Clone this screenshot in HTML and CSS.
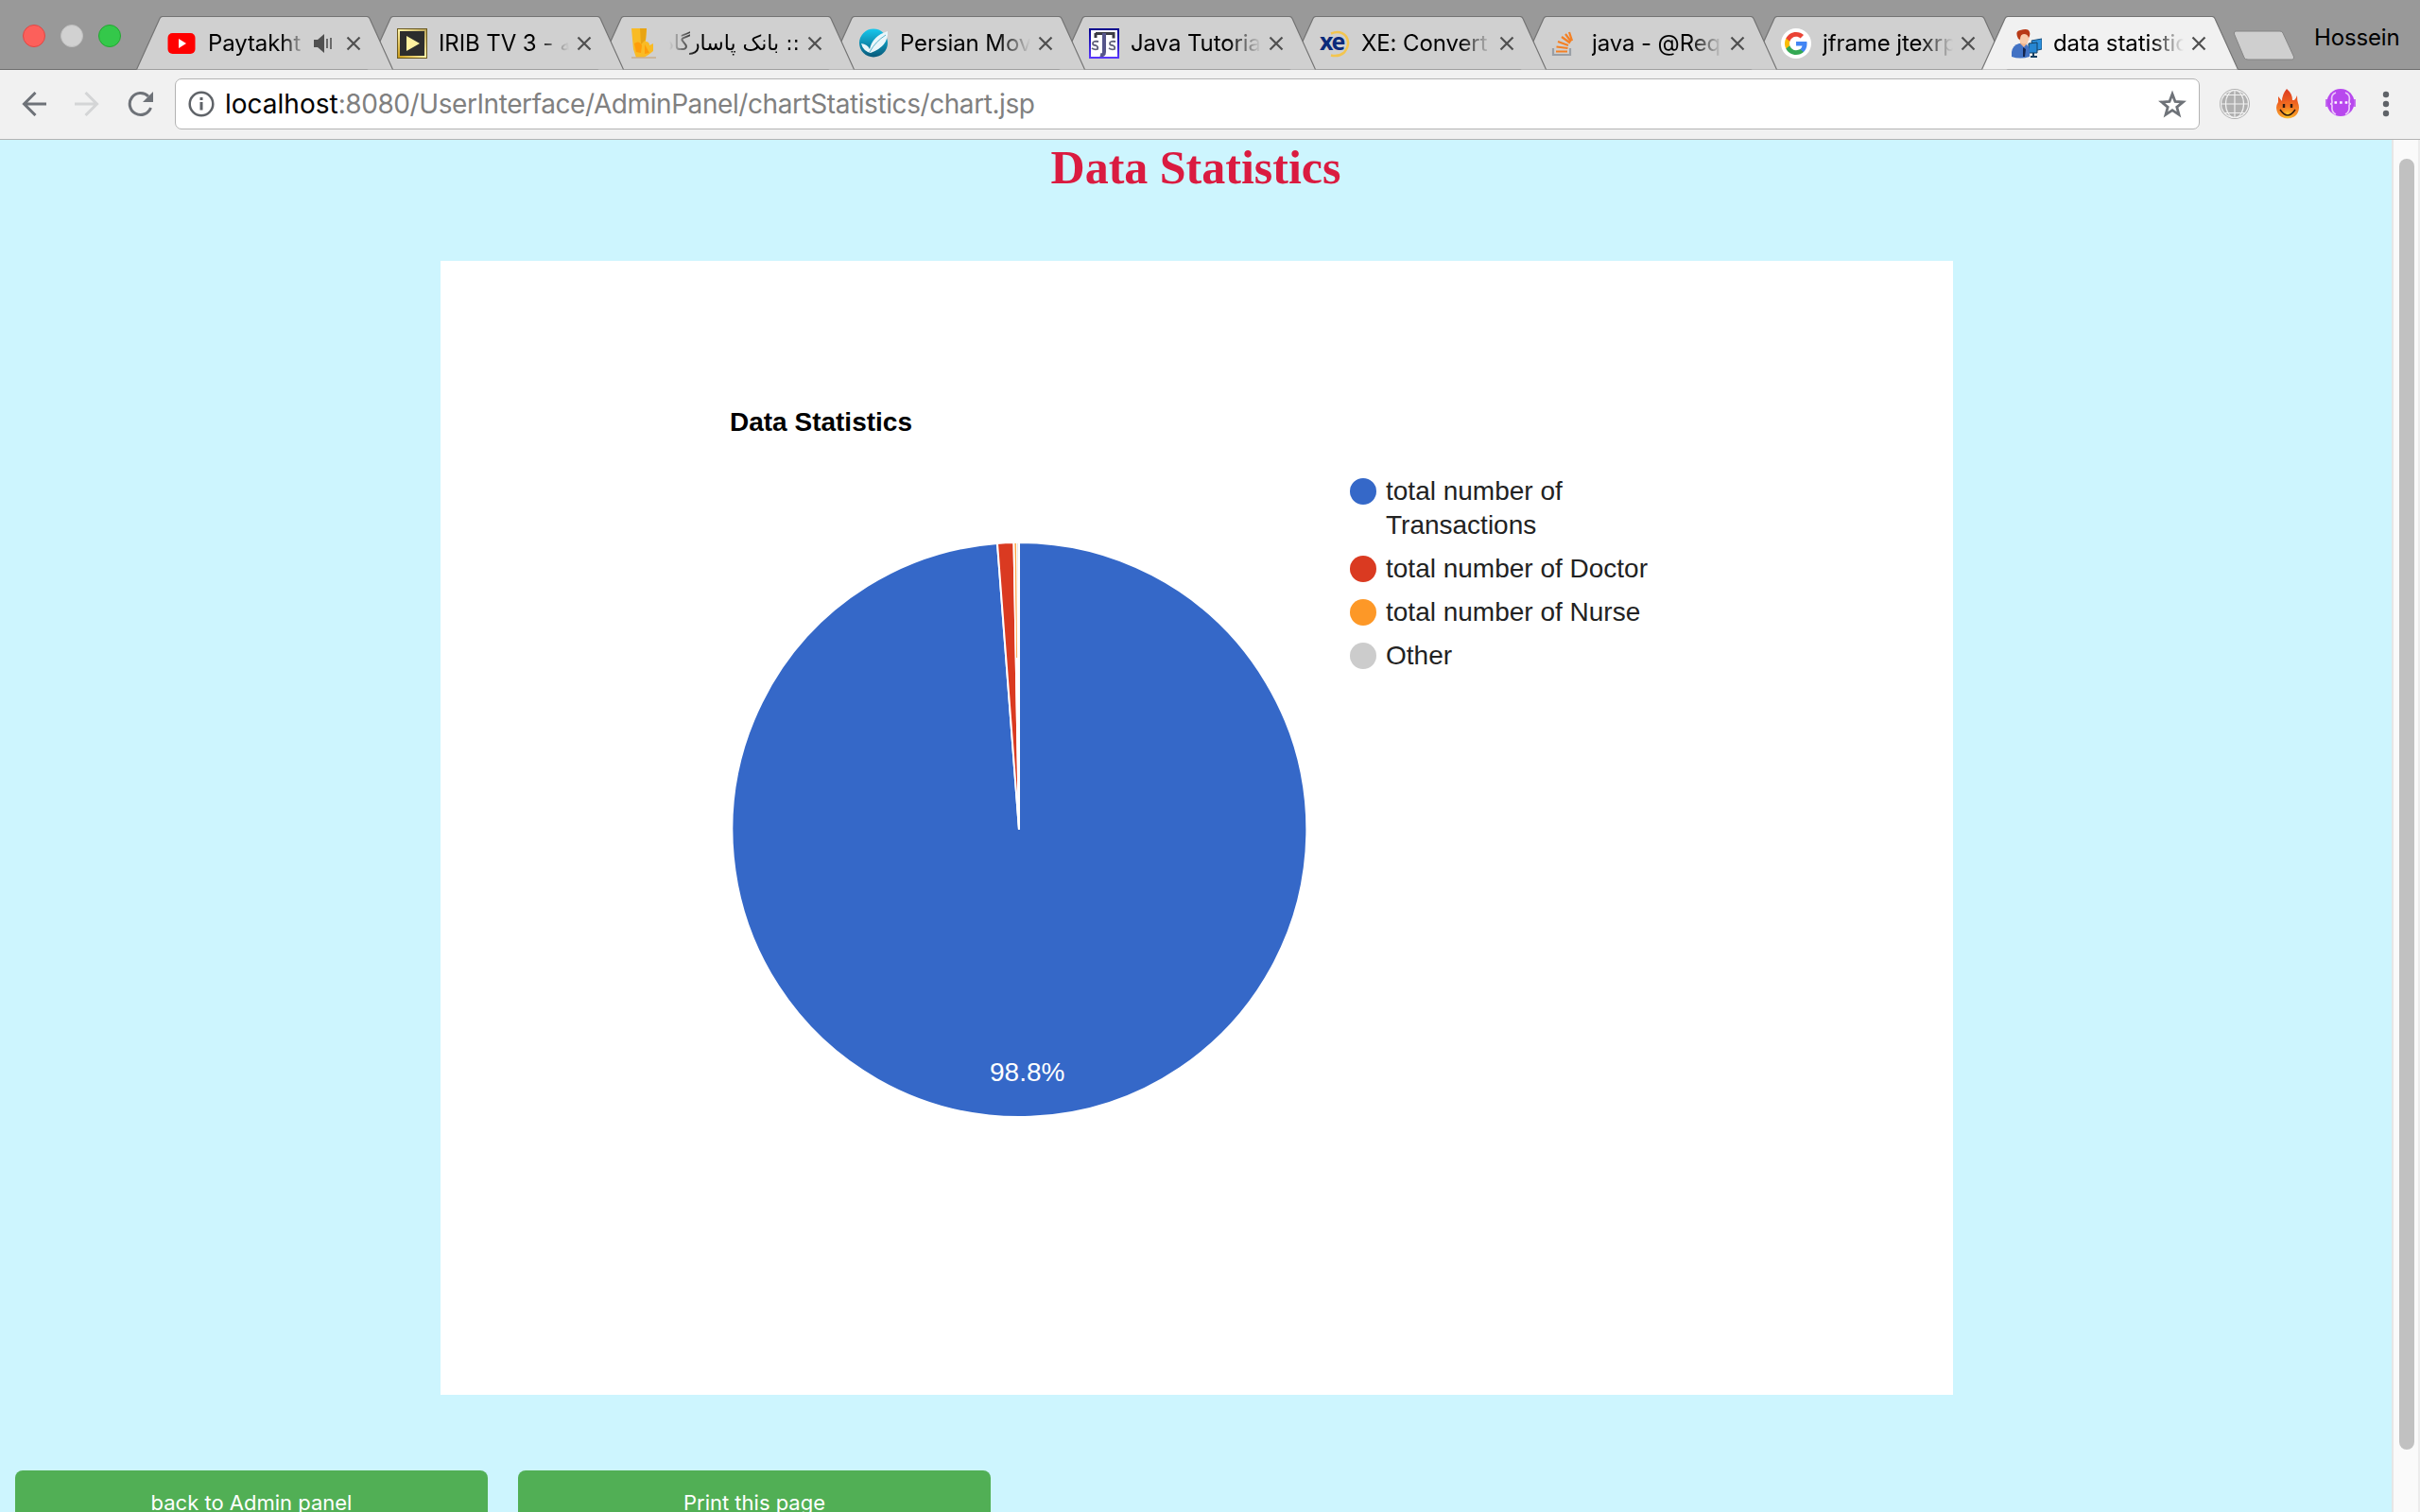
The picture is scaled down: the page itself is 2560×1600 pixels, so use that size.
FILE: index.html
```html
<!DOCTYPE html>
<html lang="en">
<head>
<meta charset="utf-8">
<title>data statistics</title>
<link rel="stylesheet" href="styles.css">
</head>
<body>
<svg class="defs" width="0" height="0" aria-hidden="true">
  <symbol id="shape" viewBox="0 0 272 57"><path d="M.5 56.5 25 2.5Q26 .5 28 .5H244Q246 .5 247 2.5L271.5 56.5"/></symbol>
  <symbol id="close" viewBox="0 0 16 16"><path d="M1.500 1.500 14.500 14.500M14.500 1.500 1.500 14.500" fill="none" stroke="#505050" stroke-width="2.200"/></symbol>
</svg>
<header class="strip">
  <div class="lights"><i class="red"></i><i class="grey"></i><i class="green"></i></div>
  <nav class="tabs">
    <div class="tab"><svg class="shape"><use href="#shape"/></svg>
      <svg class="fav" viewBox="0 0 32 32"><rect x="1.500" y="5" width="29" height="22" rx="5" fill="#f00"/><path d="M13 11v10l8-5z" fill="#fff"/></svg>
      <span class="label short">Paytakht</span>
      <svg class="speaker" viewBox="0 0 20 20"><path d="M0 6h4l7-6v20l-7-6H0z" fill="#505050"/><path d="M14 5v10M18 4v12" stroke="#505050" stroke-width="1.600"/></svg>
      <svg class="x"><use href="#close"/></svg></div>
    <div class="tab"><svg class="shape"><use href="#shape"/></svg>
      <svg class="fav" viewBox="0 0 32 32"><defs><linearGradient id="gold" x1="0" y1="1" x2="1" y2="0"><stop stop-color="#c99a16"/><stop offset=".5" stop-color="#fff3a8"/><stop offset="1" stop-color="#b9a258"/></linearGradient></defs><rect width="32" height="32" fill="#6b5a20"/><rect x="1" y="1" width="30" height="30" fill="url(#gold)"/><rect x="3" y="3" width="26" height="26" fill="#2d2d2d"/><path d="M10 8v16l14-8z" fill="#fff1a0"/></svg>
      <span class="label">IRIB TV 3 - شبکه سه</span><svg class="x"><use href="#close"/></svg></div>
    <div class="tab"><svg class="shape"><use href="#shape"/></svg>
      <svg class="fav" viewBox="0 0 32 32"><path d="M4 0h16l-1 14q4 0 4 4l4-2v8l-5 4-5 3H9L6 22z" fill="#f9bb25"/><path d="M13 0h7l-1 12-5 5z" fill="#e8a413"/><path d="M7 16q5-4 8 2l-1 8-5-1zM18 17l5 9-5 1z" fill="#ff9d0a"/><path d="M4 31h26" stroke="#c9ae8e" stroke-width="1.500"/></svg>
      <span class="label rtl" dir="rtl" lang="fa">:: بانک پاسارگاد</span><svg class="x"><use href="#close"/></svg></div>
    <div class="tab"><svg class="shape"><use href="#shape"/></svg>
      <svg class="fav" viewBox="0 0 32 32"><defs><linearGradient id="teal" x2="0" y2="1"><stop stop-color="#16c8ee"/><stop offset="1" stop-color="#075879"/></linearGradient></defs><circle cx="16" cy="15.500" r="15" fill="url(#teal)"/><path d="M3 16q7 1 9 6Q15 8 31 3q1 16-18 23Q5 24 3 16z" fill="#eaf6fa"/><path d="M12 25Q18 14 29 7" stroke="#5ab4cd" fill="none"/></svg>
      <span class="label">Persian Movies</span><svg class="x"><use href="#close"/></svg></div>
    <div class="tab"><svg class="shape"><use href="#shape"/></svg>
      <svg class="fav" viewBox="0 0 32 32"><defs><linearGradient id="indigo" x2="0" y2="1"><stop stop-color="#00008a"/><stop offset="1" stop-color="#5a38ff"/></linearGradient></defs><rect width="32" height="32" fill="url(#indigo)"/><rect x="2" y="2" width="28" height="28" fill="#fff"/><path d="M7 5.500h19v5M7 5v5" stroke="#3b3b43" stroke-width="3" fill="none"/><path d="M16 5v20q0 4-4 3" stroke="#56568a" stroke-width="4" fill="none"/><path d="M10 14q-6-1-6 2 0 2 3 2 3 1 2 4-3 1-6-1M28 14q-6-1-6 2 0 2 3 2 3 1 2 4-3 1-6-1" fill="none" stroke="#62627b" stroke-width="1.800"/></svg>
      <span class="label">Java Tutorial</span><svg class="x"><use href="#close"/></svg></div>
    <div class="tab"><svg class="shape"><use href="#shape"/></svg>
      <svg class="fav" viewBox="0 0 32 32"><path d="M12 5.500q10-4 16 3 5 8-2 17-6 5-14 3" fill="none" stroke="#f3c54e" stroke-width="2.500"/><text x="0" y="23" class="xe">xe</text></svg>
      <span class="label">XE: Convert</span><svg class="x"><use href="#close"/></svg></div>
    <div class="tab"><svg class="shape"><use href="#shape"/></svg>
      <svg class="fav" viewBox="0 0 32 32"><path d="M3 21v7h18v-7" fill="none" stroke="#9a9fa6" stroke-width="2.200"/><path d="M6 24.500h12M6.500 19.500l12 1.500M8 14l11 4M12 9l9 6.500M16 6l6 8M20 4l3 9" stroke="#f48024" stroke-width="2.200"/></svg>
      <span class="label">java - @Request</span><svg class="x"><use href="#close"/></svg></div>
    <div class="tab"><svg class="shape"><use href="#shape"/></svg>
      <svg class="fav" viewBox="0 0 32 32"><circle cx="16" cy="16" r="16" fill="#fff"/><g transform="translate(4 4)"><path fill="#4285f4" d="M23.500 12.300c0-.8-.1-1.600-.2-2.300H12v4.500h6.500c-.3 1.500-1.100 2.800-2.400 3.600v3h3.900c2.200-2 3.500-5.100 3.500-8.800z"/><path fill="#34a853" d="M12 24c3.200 0 6-1.100 8-2.900l-3.900-3c-1.100.7-2.500 1.200-4.100 1.200-3.100 0-5.800-2.100-6.700-5H1.300v3.100C3.300 21.300 7.300 24 12 24z"/><path fill="#fbbc05" d="M5.300 14.300c-.5-1.500-.5-3.100 0-4.600V6.600h-4a12 12 0 0 0 0 10.800z"/><path fill="#ea4335" d="M12 4.700c1.800 0 3.300.6 4.600 1.800L20 3.100C18 1.200 15.200 0 12 0 7.300 0 3.300 2.700 1.300 6.600l4 3.100c.9-2.900 3.600-5 6.700-5z"/></g></svg>
      <span class="label">jframe jtexrpane</span><svg class="x"><use href="#close"/></svg></div>
    <div class="tab active"><svg class="shape"><use href="#shape"/></svg>
      <svg class="fav" viewBox="0 0 32 32"><path d="M21 13l11-2v11l-9 2z" fill="#2b8fdc" stroke="#174e7c"/><path d="M18 16l9-1v11h-9z" fill="#2686d2" stroke="#123e60"/><path d="M23 26v3M20 30h7" stroke="#123e60" stroke-width="2"/><path d="M0 30V25q1-7 8-9h5q6 2 6 8v6q-10 3-19 0z" fill="#4272c4"/><path d="M12 20l3 2-1 8h-2z" fill="#15264f"/><path d="M9 16l4 4 4-5-1-3h-6z" fill="#f0b48d"/><ellipse cx="13" cy="10" rx="5.500" ry="6.500" fill="#f8cbaa"/><path d="M7 11Q3 3 9 2q9-3 10 2 1 3-1 6-1-4-5-4-4 0-4 6z" fill="#b83a17"/></svg>
      <span class="label">data statistics</span><svg class="x"><use href="#close"/></svg></div>
  </nav>
  <svg class="newtab" viewBox="0 0 66 33"><path d="M3 1H50Q52 1 53 3L64.500 28Q65 31 63 31H16Q13 31 12 29L1.500 4Q1 1 3 1z" fill="#cfcfcf" stroke="#858585"/></svg>
  <span class="user">Hossein</span>
</header>
<div class="toolbar">
  <svg class="back" viewBox="0 0 26 26"><path d="M14.500 1 2.500 13l12 12M2.500 13H26" fill="none" stroke="#6e7278" stroke-width="3"/></svg>
  <svg class="forward" viewBox="0 0 26 26"><path d="M11.500 1l12 12-12 12M23.500 13H0" fill="none" stroke="#d4d5d6" stroke-width="3"/></svg>
  <svg class="reload" viewBox="0 0 28 28"><path d="M24.500 18A11.500 11.500 0 1 1 22 6" fill="none" stroke="#6e7278" stroke-width="3"/><path d="M27 1v11H16z" fill="#6e7278"/></svg>
  <div class="omnibox">
    <svg class="info" viewBox="0 0 28 28"><circle cx="14" cy="14" r="12.300" fill="none" stroke="#5f6368" stroke-width="2.500"/><path d="M14 12v8.500M14 7v3" stroke="#5f6368" stroke-width="3"/></svg>
    <span class="url"><b>localhost</b>:8080/UserInterface/AdminPanel/chartStatistics/chart.jsp</span>
    <svg class="star" viewBox="0 0 30 30"><path d="M15 4.500l3 8 8.300.5-6.500 5.300 2.200 8L15 21.700l-7 4.600 2.200-8L3.700 13l8.300-.5z" fill="none" stroke="#6e7278" stroke-width="2.800"/></svg>
  </div>
  <svg class="globe" viewBox="0 0 32 32"><circle cx="16" cy="16" r="16" fill="#b0b0b0"/><g fill="none" stroke="#f1f1f1" stroke-width="1.200"><ellipse cx="16" cy="16" rx="9.500" ry="14.500"/><circle cx="16" cy="16" r="14.500"/><path d="M16 1v30M1 16h30M5 6.500h22M5 25.500h22"/></g></svg>
  <svg class="flame" viewBox="0 0 24 32"><defs><linearGradient id="fire" x2="0" y2="1"><stop stop-color="#dc3a22"/><stop offset=".5" stop-color="#ef6420"/><stop offset="1" stop-color="#f9a52b"/></linearGradient><radialGradient id="face" cy=".8"><stop stop-color="#ffdc30"/><stop offset="1" stop-color="#f47c22" stop-opacity=".2"/></radialGradient></defs><path d="M11 0q6 5 6 12l2 0q2-2 3-5 0 5 1 8 1 2 1 5-1 11-12 11T0 20q0-3 2-6 0-3 0-6l4 5Q6 6 11 0z" fill="url(#fire)"/><circle cx="12" cy="22" r="9.500" fill="url(#face)"/><path d="M8 16v4M16 16v4" stroke="#301a10" stroke-width="2.400"/><path d="M4 22q8 12 16 0" stroke="#301a10" stroke-width="1.500" fill="none"/></svg>
  <svg class="purple" viewBox="0 0 32 32"><circle cx="16" cy="14.500" r="14.500" fill="#b848ee"/><path d="M1 11v8M31 11v8" stroke="#b848ee" stroke-width="1.500"/><path d="M11 4Q5 6 7 14q0 2-2 2 2 0 2 2-1 7 4 9M21 4q6 2 4 10 0 2 2 2-2 0-2 2 1 7-4 9" fill="none" stroke="#ecc8fb" stroke-width="1.700"/><path d="M9.500 14.500h14" stroke="#fff" stroke-width="2.600" stroke-dasharray="2.600 3"/></svg>
  <svg class="dots" viewBox="0 0 8 28"><circle cx="4" cy="4" r="3.200"/><circle cx="4" cy="14" r="3.200"/><circle cx="4" cy="24" r="3.200"/></svg>
</div>
<div class="view">
  <main class="page">
    <h1>Data Statistics</h1>
    <section class="panel">
      <svg class="pie" viewBox="0 0 648 850">
        <text x="6" y="180" class="title">Data Statistics</text>
        <g stroke="#fff" stroke-width="2">
          <path d="M312 602V298A304 304 0 1 1 289 298.900z" fill="#3568c8"/>
          <path d="M312 602 289 298.900A304 304 0 0 1 306.500 298.050z" fill="#da3a21"/>
          <path d="M312 602 306.500 298.050A304 304 0 0 1 309.500 298z" fill="#fd9827"/>
          <path d="M312 602 309.500 298H312z" fill="#ccc"/>
        </g>
        <path d="M308.400 299 309.600 420" stroke="#fd9827" stroke-width=".8"/>
        <text x="281" y="868" class="pct">98.8%</text>
      </svg>
      <ul class="legend">
        <li><i class="c1"></i>total number of Transactions</li>
        <li><i class="c2"></i>total number of Doctor</li>
        <li><i class="c3"></i>total number of Nurse</li>
        <li><i class="c4"></i>Other</li>
      </ul>
    </section>
    <div class="actions"><button>back to Admin panel</button><button>Print this page</button></div>
  </main>
  <div class="scroll"><div class="thumb"></div></div>
</div>
</body>
</html>
```
FILE: styles.css
```css
* { box-sizing: border-box; }
body { margin: 0; width: 2560px; height: 1600px; overflow: hidden; display: flex; flex-direction: column; font-family: Inter, "Noto Sans", sans-serif; background: #cdf5fe; }
svg { display: block; flex: none; }
.defs { position: absolute; }
.strip { height: 74px; flex: none; display: flex; background: #999; border-bottom: 1px solid #6d6d6d; padding-left: 24px; }
.lights { display: flex; gap: 16px; padding-top: 26px; width: 120px; flex: none; }
.lights i { width: 24px; height: 24px; border-radius: 50%; border: 1px solid; }
.lights .red { background: #fc605b; border-color: #df4744; }
.lights .grey { background: #d1d1d1; border-color: #bfbfbf; }
.lights .green { background: #34c84a; border-color: #24a732; }
.tabs { display: flex; padding-top: 17px; isolation: isolate; flex: none; }
.tab { position: relative; width: 272px; height: 57px; margin-right: -28px; padding: 13px 0 0 32px; display: flex; fill: #d0d0d0; }
.tab:nth-child(1) { z-index: 9; }
.tab:nth-child(2) { z-index: 8; }
.tab:nth-child(3) { z-index: 7; }
.tab:nth-child(4) { z-index: 6; }
.tab:nth-child(5) { z-index: 5; }
.tab:nth-child(6) { z-index: 4; }
.tab:nth-child(7) { z-index: 3; }
.tab:nth-child(8) { z-index: 2; }
.tab.active { z-index: 10; fill: #f1f1f1; }
.shape { position: absolute; left: 0; top: 0; width: 272px; height: 57px; z-index: -1; stroke: #737373; stroke-width: 1.2; }
.fav { width: 32px; height: 32px; }
.label { width: 138px; margin: 0 8px 0 12px; height: 32px; font-size: 24px; line-height: 32px; letter-spacing: -0.1px; white-space: nowrap; overflow: hidden; -webkit-mask-image: linear-gradient(90deg, #000 75%, transparent); mask-image: linear-gradient(90deg, #000 75%, transparent); }
.label.rtl { -webkit-mask-image: linear-gradient(270deg, #000 78%, transparent); mask-image: linear-gradient(270deg, #000 78%, transparent); font-family: "DejaVu Sans", sans-serif; font-size: 22px; letter-spacing: 0; }
.label.short { width: 104px; margin-right: 8px; }
.speaker { width: 20px; height: 20px; margin: 6px 14px 0 0; }
.x { width: 16px; height: 16px; margin-top: 8px; }
.xe { font: bold 25px "Open Sans", sans-serif; fill: #0a2a7a; letter-spacing: -2px; }
.newtab { width: 66px; height: 33px; margin: 32px 0 0 22px; }
.user { font-size: 24px; line-height: 32px; letter-spacing: -0.15px; margin: 24px 0 0 20px; }
.toolbar { height: 74px; flex: none; background: #f1f1f1; border-bottom: 1px solid #b3b3b3; display: flex; align-items: center; padding: 0 0 2px 23px; }
.back, .forward { width: 26px; height: 26px; margin-right: 30px; }
.reload { width: 28px; height: 28px; }
.omnibox { width: 2142px; height: 54px; margin: 0 21px 0 22px; background: #fff; border: 1px solid #b3b3b3; border-radius: 7px; display: flex; align-items: center; padding: 0 13px 0 13px; }
.info { width: 28px; height: 28px; margin-right: 11px; }
.url { flex: 1; padding-top: 1px; font-size: 28px; letter-spacing: -0.42px; color: #808080; }
.url b { font-weight: 400; letter-spacing: 0; color: #000; }
.star { width: 30px; height: 30px; }
.globe { width: 32px; height: 32px; }
.flame { width: 24px; height: 32px; margin: 0 28px; }
.purple { width: 32px; height: 32px; }
.dots { width: 8px; height: 28px; margin-left: 28px; fill: #5f6368; }
.view { flex: 1; min-height: 0; display: flex; }
.page { width: 2530px; min-height: 0; display: flex; flex-direction: column; align-items: center; }
h1 { margin: 0; height: 128px; flex: none; font: bold 50px/58px "Liberation Serif", serif; color: #da1b40; }
.panel { width: 1600px; height: 1200px; margin-left: 2px; flex: none; background: #fff; display: flex; padding-left: 300px; font: 28px "Liberation Sans", sans-serif; }
.pie { width: 648px; height: 850px; overflow: visible; }
.title { font-weight: bold; }
.pct { fill: #fff; }
.legend { list-style: none; margin: 226px 0 0 14px; padding: 0; display: flex; flex-direction: column; gap: 10px; color: #222; }
.legend li { display: flex; gap: 10px; width: 330px; line-height: 36px; }
.legend i { width: 28px; height: 28px; border-radius: 50%; flex: none; margin-top: 4px; }
.c1 { background: #3568c8; }
.c2 { background: #da3a21; }
.c3 { background: #fd9827; }
.c4 { background: #ccc; }
.actions { align-self: flex-start; flex: none; display: flex; gap: 32px; padding: 80px 0 0 16px; }
button { width: 500px; height: 80px; border: 0; border-radius: 8px; background: #51af55; color: #fff; font: 22px Inter, sans-serif; padding: 0 0 12px; }
.scroll { width: 30px; background: #fafafa; border-left: 2px solid #e6e6e6; border-right: 2px solid #ececec; padding: 20px 4px 0 6px; }
.thumb { width: 16px; height: 1366px; border-radius: 8px; background: #c1c1c1; }
```
